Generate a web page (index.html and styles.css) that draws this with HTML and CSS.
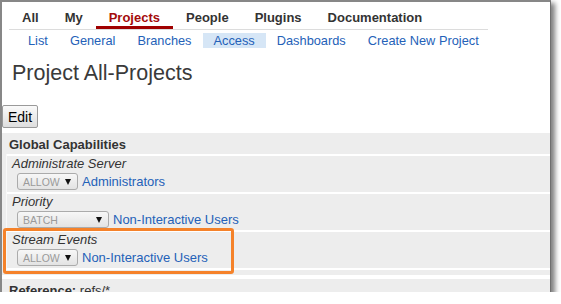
FILE: index.html
```html
<!DOCTYPE html>
<html lang="en">
<head>
  <meta charset="UTF-8">
  <title>Project All-Projects</title>
  <link rel="stylesheet" href="styles.css">
</head>
<body>
  <div class="window">
    <div class="topnav">
      <a class="tab">All</a>
      <a class="tab">My</a>
      <a class="tab active">Projects</a>
      <a class="tab">People</a>
      <a class="tab">Plugins</a>
      <a class="tab">Documentation</a>
    </div>

    <div class="subnav">
      <a>List</a>
      <a>General</a>
      <a>Branches</a>
      <a class="current">Access</a>
      <a>Dashboards</a>
      <a>Create New Project</a>
    </div>

    <h1 class="title">Project All-Projects</h1>

    <button class="edit">Edit</button>

    <!-- Global capabilities section -->
    <div class="section">
      <div class="section-head">Global Capabilities</div>
      <div class="rows">
        <div class="row">
          <div class="perm">Administrate Server</div>
          <div class="grant">
            <span class="pick"><span>ALLOW</span><i class="arrow"></i></span>
            <a class="group">Administrators</a>
          </div>
        </div>
        <div class="row">
          <div class="perm">Priority</div>
          <div class="grant">
            <span class="pick wide"><span>BATCH</span><i class="arrow"></i></span>
            <a class="group">Non-Interactive Users</a>
          </div>
        </div>
        <div class="row">
          <div class="perm">Stream Events</div>
          <div class="grant">
            <span class="pick"><span>ALLOW</span><i class="arrow"></i></span>
            <a class="group">Non-Interactive Users</a>
          </div>
        </div>
      </div>
    </div>

    <div class="section">
      <div class="section-head"><b>Reference:</b> <span class="ref">refs/*</span></div>
    </div>

    <div class="highlight"></div>
  </div>
</body>
</html>
```

FILE: styles.css
```css
body {
  margin: 0;
  background: #fff;
  font-family: "Liberation Sans", Arial, sans-serif;
  color: #333;
}
.window {
  position: relative;
  width: 548px;
  height: 290px;
  background: #fff;
  border-top: 2px solid #878787;
  border-left: 2px solid #878787;
  border-right: 1px solid #6f6f6f;
  box-shadow: 3px 4px 5px 1px rgba(0, 0, 0, 0.5);
  overflow: hidden;
}
.topnav {
  display: flex;
  width: 479px;
  margin-left: 7px;
  padding-top: 8px;
  border-bottom: 1px solid #dcdcdc;
}
.tab {
  font-size: 13px;
  font-weight: bold;
  line-height: 16px;
  padding: 0 13px;
  color: #333;
  border-bottom: 3px solid transparent;
}
.tab.active {
  color: #a40b0b;
  border-bottom-color: #a00000;
}
.subnav {
  display: flex;
  margin: 3px 0 0 15px;
}
.subnav a {
  font-size: 12.8px;
  line-height: 15px;
  padding: 0 11px;
  color: #2461b8;
}
.subnav a.current {
  background: #d6e6f6;
}
.title {
  margin: 12px 0 0 10px;
  font-size: 21.5px;
  line-height: 26px;
  font-weight: normal;
  color: #3a3a3a;
}
.edit {
  display: block;
  margin: 19px 0 0 0;
  height: 23px;
  padding: 0 5px;
  font-family: "Liberation Sans", Arial, sans-serif;
  font-size: 14px;
  color: #000;
  background: linear-gradient(#fafafa, #dedede);
  border: 1px solid #9a9a9a;
  border-radius: 2px;
}
.section {
  margin-top: 5px;
  background: #ededed;
  padding-bottom: 5px;
}
.section + .section {
  margin-top: 4px;
}
.section-head {
  font-size: 13px;
  font-weight: bold;
  line-height: 16px;
  padding: 4px 0 1px 7px;
}
.ref {
  font-weight: normal;
}
.rows {
  margin-left: 4px;
  border-left: 1px solid #f8f8f8;
  border-bottom: 2px solid #fff;
}
.row {
  border-top: 2px solid #fff;
  padding: 0 0 2px 5px;
}
.perm {
  font-size: 13px;
  font-style: italic;
  line-height: 15px;
  color: #333;
}
.grant {
  display: flex;
  align-items: center;
  gap: 4px;
  margin-top: 2px;
  padding-left: 5px;
}
.pick {
  display: inline-flex;
  align-items: center;
  justify-content: space-between;
  box-sizing: border-box;
  width: 61px;
  height: 17px;
  padding: 0 6px 0 5px;
  border: 1px solid #ababab;
  border-radius: 3px;
  background: linear-gradient(#f7f7f7, #e3e3e3);
  font-size: 10.5px;
  color: #9a9a9a;
}
.pick.wide {
  width: 92px;
}
.arrow {
  width: 0;
  height: 0;
  border-left: 3.5px solid transparent;
  border-right: 3.5px solid transparent;
  border-top: 6px solid #111;
}
.group {
  font-size: 13px;
  line-height: 17px;
  color: #2461b8;
}
.highlight {
  position: absolute;
  left: 1px;
  top: 226px;
  width: 225px;
  height: 40px;
  border: 3px solid #f5822a;
  border-radius: 3px;
}
```
